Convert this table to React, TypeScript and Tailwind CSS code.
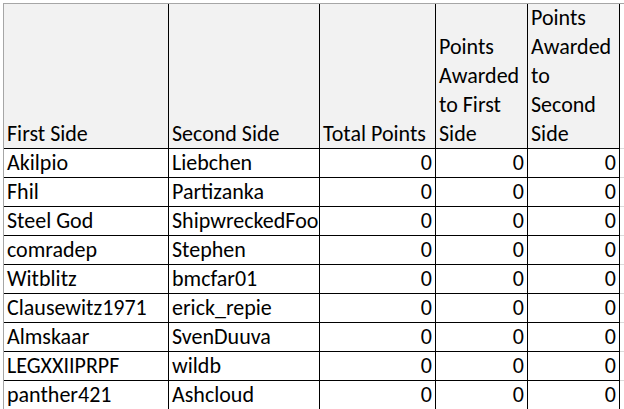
import React from "react";

const rows: [string, string][] = [
  ["Akilpio", "Liebchen"],
  ["Fhil", "Partizanka"],
  ["Steel God", "ShipwreckedFool"],
  ["comradep", "Stephen"],
  ["Witblitz", "bmcfar01"],
  ["Clausewitz1971", "erick_repie"],
  ["Almskaar", "SvenDuuva"],
  ["LEGXXIIPRPF", "wildb"],
  ["panther421", "Ashcloud"],
];

const cell = "border-r border-b border-black overflow-hidden whitespace-nowrap flex items-end";

export default function App() {
  return (
    <div
      className="w-[624px] h-[409px] bg-white overflow-hidden pt-[3px] pl-[3px] text-black"
      style={{ fontFamily: "Carlito, Lato, 'Liberation Sans', sans-serif" }}
    >
      <div className="grid grid-cols-[165px_151px_116px_92px_92px_1fr] border-t border-l border-[#a6a6a6] text-[22px] leading-[29px]">
        <div className={`${cell} h-[145px] bg-[#f2f2f2] pl-[3px]`}>First Side</div>
        <div className={`${cell} h-[145px] bg-[#f2f2f2] pl-[3px]`}>Second Side</div>
        <div className={`${cell} h-[145px] bg-[#f2f2f2] pl-[3px]`}>Total Points</div>
        <div className={`${cell} h-[145px] bg-[#f2f2f2] pl-[3px] whitespace-normal`}>
          <span>Points<br />Awarded<br />to First<br />Side</span>
        </div>
        <div className={`${cell} h-[145px] bg-[#f2f2f2] pl-[3px] whitespace-normal`}>
          <span>Points<br />Awarded<br />to<br />Second<br />Side</span>
        </div>
        <div className="h-[145px] border-b border-[#dadada]" />
        {rows.map(([a, b], i) => (
          <React.Fragment key={i}>
            <div className={`${cell} h-[29px] pl-[3px]`}>{a}</div>
            <div className={`${cell} h-[29px] pl-[3px]`}>{b}</div>
            <div className={`${cell} h-[29px] justify-end pr-[3px]`}>0</div>
            <div className={`${cell} h-[29px] justify-end pr-[3px]`}>0</div>
            <div className={`${cell} h-[29px] justify-end pr-[3px]`}>0</div>
            <div className="h-[29px] border-b border-[#dadada]" />
          </React.Fragment>
        ))}
      </div>
    </div>
  );
}
